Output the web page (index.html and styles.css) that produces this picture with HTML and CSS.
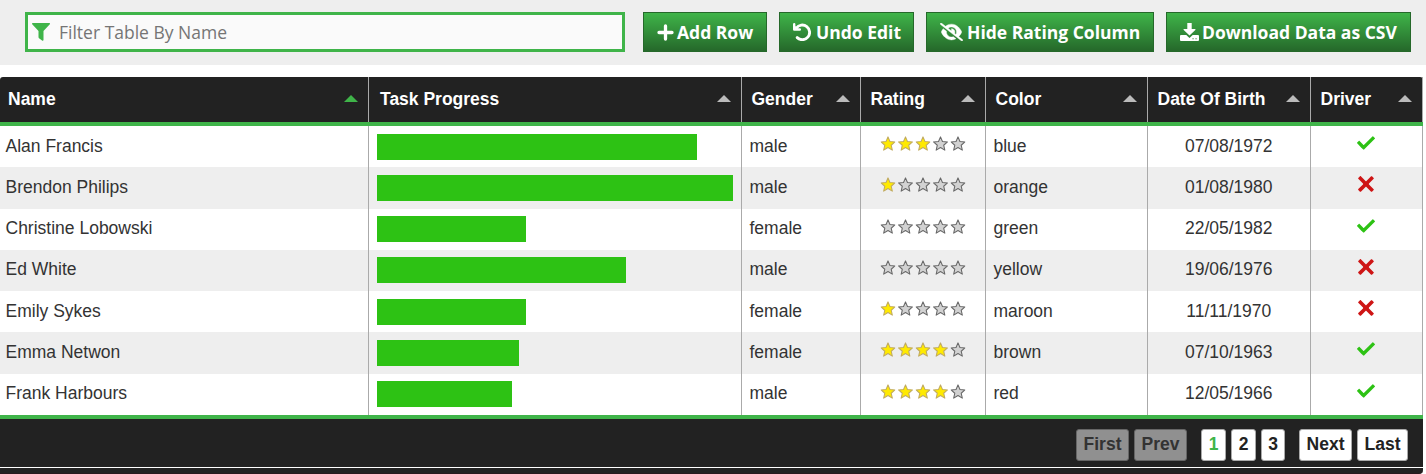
FILE: index.html
```
<!DOCTYPE html>
<html lang="en">
<head>
<meta charset="utf-8">
<title>Table</title>
<link rel="stylesheet" href="styles.css">
</head>
<body>
<svg class="defs" width="0" height="0">
  <symbol id="tick" viewBox="0 0 24 24"><path fill="#2dc214" d="M21.652,3.211c-0.293-0.295-0.77-0.295-1.061,0L9.41,14.34c-0.293,0.297-0.771,0.297-1.062,0L3.449,9.351C3.304,9.203,3.114,9.13,2.923,9.129C2.73,9.128,2.534,9.201,2.387,9.351l-2.165,1.946C0.078,11.445,0,11.63,0,11.823c0,0.194,0.078,0.397,0.223,0.544l4.94,5.184c0.292,0.296,0.771,0.776,1.062,1.07l2.124,2.141c0.292,0.293,0.769,0.293,1.062,0l14.366-14.34c0.293-0.294,0.293-0.777,0-1.071L21.652,3.211z"/></symbol>
  <symbol id="cross" viewBox="0 0 24 24"><path fill="#ce1515" d="M22.245,4.015c0.313,0.313,0.313,0.826,0,1.139l-6.276,6.27c-0.313,0.312-0.313,0.826,0,1.14l6.273,6.272c0.313,0.313,0.313,0.826,0,1.14l-2.285,2.277c-0.314,0.312-0.828,0.312-1.142,0l-6.271-6.271c-0.313-0.313-0.828-0.313-1.141,0l-6.276,6.267c-0.313,0.313-0.828,0.313-1.141,0l-2.282-2.28c-0.313-0.313-0.313-0.826,0-1.14l6.278-6.269c0.313-0.312,0.313-0.826,0-1.14L1.709,5.147c-0.314-0.313-0.314-0.827,0-1.14l2.284-2.278C4.308,1.417,4.821,1.417,5.135,1.73L11.405,8c0.314,0.314,0.828,0.314,1.141,0.001l6.276-6.267c0.312-0.312,0.826-0.312,1.141,0L22.245,4.015z"/></symbol>
  <symbol id="star" viewBox="0 0 512 512"><path stroke-width="36" stroke-linejoin="round" d="M256 30 L323 187 L494 202 L365 315 L403 482 L256 394 L109 482 L147 315 L18 202 L189 187 Z"/></symbol>
  <symbol id="s0" viewBox="0 0 85 15"><g class="off"><use href="#star" x="0" width="15" height="15"/><use href="#star" x="17.5" width="15" height="15"/><use href="#star" x="35" width="15" height="15"/><use href="#star" x="52.5" width="15" height="15"/><use href="#star" x="70" width="15" height="15"/></g></symbol>
  <symbol id="s1" viewBox="0 0 85 15"><g class="on"><use href="#star" x="0" width="15" height="15"/></g><g class="off"><use href="#star" x="17.5" width="15" height="15"/><use href="#star" x="35" width="15" height="15"/><use href="#star" x="52.5" width="15" height="15"/><use href="#star" x="70" width="15" height="15"/></g></symbol>
  <symbol id="s3" viewBox="0 0 85 15"><g class="on"><use href="#star" x="0" width="15" height="15"/><use href="#star" x="17.5" width="15" height="15"/><use href="#star" x="35" width="15" height="15"/></g><g class="off"><use href="#star" x="52.5" width="15" height="15"/><use href="#star" x="70" width="15" height="15"/></g></symbol>
  <symbol id="s4" viewBox="0 0 85 15"><g class="on"><use href="#star" x="0" width="15" height="15"/><use href="#star" x="17.5" width="15" height="15"/><use href="#star" x="35" width="15" height="15"/><use href="#star" x="52.5" width="15" height="15"/></g><g class="off"><use href="#star" x="70" width="15" height="15"/></g></symbol>
</svg>

<div class="toolbar">
  <div class="filter">
    <svg width="18" height="18" viewBox="0 0 18 18"><path fill="#3fb449" d="M.6 0H17.4Q18.4.4 17.8 1.3L11.5 8V17Q11.300 18 10.400 17.700L7 15.200Q6.500 14.800 6.500 14V8L.2 1.300Q-.3.400.600 0Z"/></svg>
    <span>Filter Table By Name</span>
  </div>
  <button class="btn add"><svg width="17" height="17" viewBox="0 0 17 17"><path d="M8.500 2V15M2 8.500H15" stroke="#fff" stroke-width="3.300" stroke-linecap="round"/></svg><span>Add Row</span></button>
  <button class="btn undo"><svg width="18" height="18" viewBox="0 0 18 18" fill="none" stroke="#fff"><path d="M3.300 5.200A7.300 7.300 0 1 1 4.200 14.600" stroke-width="2.900" stroke-linecap="round"/><path d="M1.200 1.200V6.500H6.800" stroke-width="2.400" stroke-linecap="round" stroke-linejoin="round"/><path d="M1 2L6 6.500H1Z" fill="#fff" stroke="none"/></svg><span>Undo Edit</span></button>
  <button class="btn hide"><svg width="23" height="18" viewBox="0 0 640 512"><path fill="#fff" stroke="#fff" stroke-width="12" d="M38.800 5.100C28.400-3.100 13.300-1.200 5.100 9.200S-1.200 34.700 9.200 42.900l592 464c10.400 8.200 25.500 6.300 33.700-4.100s6.300-25.500-4.100-33.700L525.600 386.700c39.600-40.600 66.400-86.100 79.900-118.400c3.300-7.900 3.300-16.700 0-24.600c-14.900-35.700-46.200-87.700-93-131.100C465.500 68.800 400.800 32 320 32c-68.200 0-125 26.300-169.300 60.800L38.800 5.100zM223.100 149.500C248.600 126.200 282.700 112 320 112c79.500 0 144 64.500 144 144c0 24.900-6.300 48.300-17.400 68.700L408 294.500c8.400-19.300 10.600-41.400 4.800-63.300c-11.100-41.500-47.800-69.400-88.600-71.100c-5.800-.2-9.200 6.100-7.400 11.700c2.100 6.400 3.300 13.200 3.300 20.300c0 10.200-2.400 19.800-6.600 28.300l-90.300-70.800zM373 389.900c-16.400 6.500-34.300 10.100-53 10.100c-79.500 0-144-64.500-144-144c0-6.900 .5-13.600 1.400-20.200L83.100 161.500C60.300 191.200 44 220.800 34.500 243.700c-3.300 7.900-3.300 16.700 0 24.600c14.900 35.700 46.200 87.700 93 131.100C174.500 443.200 239.200 480 320 480c47.800 0 89.900-12.900 126.200-32.500L373 389.900z"/></svg><span>Hide Rating Column</span></button>
  <button class="btn down"><svg width="19" height="18" viewBox="0 0 19 18" fill="#fff"><path d="M7.300 0H11.700V6H15.200Q15.800 6.300 15.300 6.900L9.500 12.600L3.700 6.900Q3.200 6.300 3.800 6H7.300Z"/><path fill-rule="evenodd" d="M1 12H6.300L9.500 15L12.700 12H18Q19 12 19 13V17Q19 18 18 18H1Q0 18 0 17V13Q0 12 1 12ZM12.500 15.200V16.300H13.600V15.200ZM15.500 15.200V16.300H16.600V15.200Z"/></svg><span>Download Data as CSV</span></button>
</div>

<div class="table">
  <div class="row head">
    <div class="cell">Name<i class="arrow active"></i></div>
    <div class="cell">Task Progress<i class="arrow"></i></div>
    <div class="cell">Gender<i class="arrow"></i></div>
    <div class="cell">Rating<i class="arrow"></i></div>
    <div class="cell">Color<i class="arrow"></i></div>
    <div class="cell">Date Of Birth<i class="arrow"></i></div>
    <div class="cell">Driver<i class="arrow"></i></div>
  </div>
  <div class="body">
    <div class="row"><div class="cell">Alan Francis</div><div class="cell"><div class="bar" style="width:90%"></div></div><div class="cell">male</div><div class="cell mid"><svg class="stars"><use href="#s3"/></svg></div><div class="cell">blue</div><div class="cell mid">07/08/1972</div><div class="cell mid"><svg class="mark"><use href="#tick"/></svg></div></div>
    <div class="row"><div class="cell">Brendon Philips</div><div class="cell"><div class="bar" style="width:100%"></div></div><div class="cell">male</div><div class="cell mid"><svg class="stars"><use href="#s1"/></svg></div><div class="cell">orange</div><div class="cell mid">01/08/1980</div><div class="cell mid"><svg class="mark"><use href="#cross"/></svg></div></div>
    <div class="row"><div class="cell">Christine Lobowski</div><div class="cell"><div class="bar" style="width:42%"></div></div><div class="cell">female</div><div class="cell mid"><svg class="stars"><use href="#s0"/></svg></div><div class="cell">green</div><div class="cell mid">22/05/1982</div><div class="cell mid"><svg class="mark"><use href="#tick"/></svg></div></div>
    <div class="row"><div class="cell">Ed White</div><div class="cell"><div class="bar" style="width:70%"></div></div><div class="cell">male</div><div class="cell mid"><svg class="stars"><use href="#s0"/></svg></div><div class="cell">yellow</div><div class="cell mid">19/06/1976</div><div class="cell mid"><svg class="mark"><use href="#cross"/></svg></div></div>
    <div class="row"><div class="cell">Emily Sykes</div><div class="cell"><div class="bar" style="width:42%"></div></div><div class="cell">female</div><div class="cell mid"><svg class="stars"><use href="#s1"/></svg></div><div class="cell">maroon</div><div class="cell mid">11/11/1970</div><div class="cell mid"><svg class="mark"><use href="#cross"/></svg></div></div>
    <div class="row"><div class="cell">Emma Netwon</div><div class="cell"><div class="bar" style="width:40%"></div></div><div class="cell">female</div><div class="cell mid"><svg class="stars"><use href="#s4"/></svg></div><div class="cell">brown</div><div class="cell mid">07/10/1963</div><div class="cell mid"><svg class="mark"><use href="#tick"/></svg></div></div>
    <div class="row"><div class="cell">Frank Harbours</div><div class="cell"><div class="bar" style="width:38%"></div></div><div class="cell">male</div><div class="cell mid"><svg class="stars"><use href="#s4"/></svg></div><div class="cell">red</div><div class="cell mid">12/05/1966</div><div class="cell mid"><svg class="mark"><use href="#tick"/></svg></div></div>
  </div>
  <div class="footer">
    <button class="page disabled w53">First</button>
    <button class="page disabled w53">Prev</button>
    <div class="pages">
      <button class="page current">1</button>
      <button class="page">2</button>
      <button class="page w24">3</button>
    </div>
    <button class="page w53">Next</button>
    <button class="page w51">Last</button>
  </div>
  <div class="edge"></div>
</div>
</body>
</html>
```
FILE: styles.css
```
* { box-sizing: border-box; }
body {
  margin: 0;
  height: 474px;
  overflow: hidden;
  background: #fff;
  font-family: "Liberation Sans", Arial, sans-serif;
  font-size: 17.5px;
  color: #333;
}
svg { display: block; flex: none; }
.defs { position: absolute; }

.toolbar {
  display: flex;
  height: 65px;
  padding: 12px 0 0 25px;
  background: #eee;
  font-family: "Open Sans", sans-serif;
  font-size: 17.5px;
}
.filter {
  display: flex;
  align-items: center;
  gap: 9px;
  width: 600px;
  height: 40px;
  margin-right: 18px;
  padding: 0 4px;
  border: 3px solid #3fb449;
  background: #fafafa;
  color: #757575;
}
.btn {
  display: flex;
  align-items: center;
  gap: 4px;
  height: 40px;
  margin-right: 12px;
  padding: 0 0 0 13px;
  border: 1px solid #25682a;
  background: linear-gradient(to bottom, #3fb449 0%, #25682a 100%);
  color: #fff;
  font: bold 17.5px "Open Sans", sans-serif;
  white-space: nowrap;
}
.add { width: 124px; gap: 3px; }
.undo { width: 135px; gap: 5px; }
.hide { width: 228px; }
.down { width: 245px; gap: 3px; }

.table { width: 1423px; margin-top: 12px; }
.row {
  display: grid;
  grid-template-columns: 369px 373px 119px 125px 162px 163px 112px;
  height: 41.28px;
}
.body { height: 289px; }
.body .row:nth-child(even) { background: #eee; }
.cell {
  padding: 7.6px 8px 0 7.5px;
  border-right: 1px solid #aaa;
  line-height: 24px;
  white-space: nowrap;
}
.cell:first-child { padding-left: 5.5px; }
.mid { display: flex; justify-content: center; }
.head {
  height: 49px;
  border-bottom: 4px solid #3fb449;
  border-radius: 3px 3px 0 0;
  background: #222;
  color: #fff;
  font-weight: bold;
}
.head .cell {
  display: flex;
  justify-content: space-between;
  align-items: center;
  padding: 0 10.5px 2px 9.5px;
}
.head .cell:first-child { padding-left: 8px; }
.head .cell:nth-child(2) { padding-left: 11px; }
.arrow {
  border: 7px solid transparent;
  border-top: 0;
  border-bottom-color: #bbb;
}
.arrow.active { border-bottom-color: #3fb449; }
.bar { height: 26px; background: #2dc214; }
.stars { width: 86px; height: 15px; margin-top: 2.4px; }
.on { fill: #ffea00; stroke: #c1ab60; }
.off { fill: #d2d2d2; stroke: #686868; }
.mark { width: 18px; height: 18px; margin: .4px 1px 0 0; }

.footer {
  display: flex;
  justify-content: flex-end;
  gap: 5px;
  height: 52px;
  padding: 10px 15px 0 0;
  border-top: 4px solid #3fb449;
  background: #222;
}
.pages { display: flex; gap: 5px; margin: 0 9px; }
.page {
  width: 25px;
  height: 32px;
  padding: 0 0 2px;
  border: 1px solid #aaa;
  border-radius: 3px;
  background: #fff;
  color: #222;
  font: bold 17.5px "Liberation Sans", Arial, sans-serif;
}
.page.disabled { background: #909090; border-color: #666; color: #333; }
.page.current { color: #3fb449; }
.page.w53 { width: 53px; }
.page.w51 { width: 51px; }
.page.w24 { width: 24px; }
.edge {
  height: 6px;
  margin-top: 1px;
  border-bottom: 1px solid #281a1e;
  border-radius: 0 0 4px 0;
  background: #222;
}
```
